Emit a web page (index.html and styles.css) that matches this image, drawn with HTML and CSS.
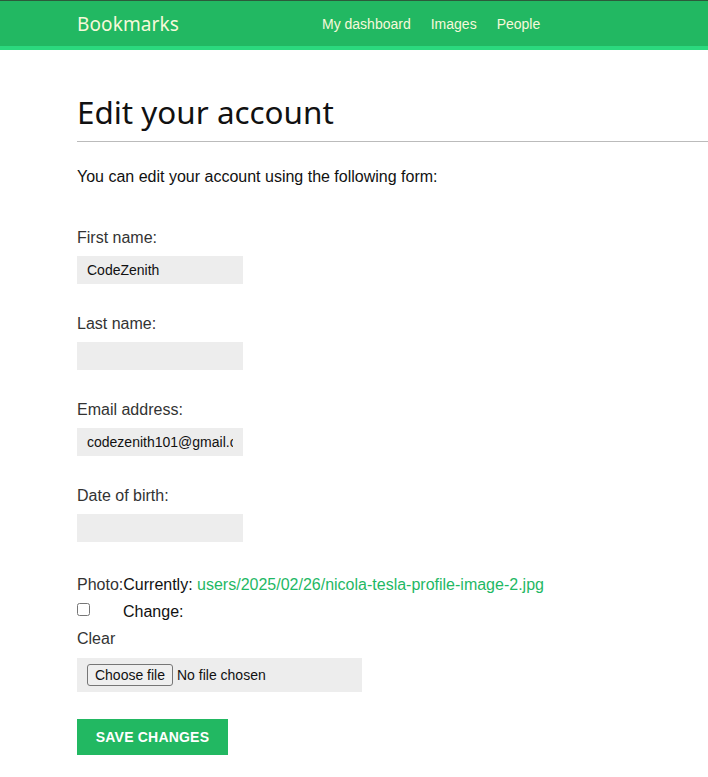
FILE: index.html
```html
<!DOCTYPE html>
<html>
<head>
<meta charset="utf-8">
<link rel="stylesheet" href="styles.css">
<title>Edit your account</title>
</head>
<body>
<div class="header">
  <span class="logo">Bookmarks</span>
  <ul class="menu">
    <li><a href="#">My dashboard</a></li>
    <li><a href="#">Images</a></li>
    <li><a href="#">People</a></li>
  </ul>
</div>
<div class="content">
  <h1 class="title">Edit your account</h1>
  <p class="intro">You can edit your account using the following form:</p>
  <form class="form">
    <div class="field">
      <label class="label">First name:</label>
      <input class="text" type="text" value="CodeZenith">
    </div>
    <div class="field">
      <label class="label">Last name:</label>
      <input class="text" type="text" value="">
    </div>
    <div class="field">
      <label class="label">Email address:</label>
      <input class="text" type="text" value="codezenith101@gmail.com">
    </div>
    <div class="field">
      <label class="label">Date of birth:</label>
      <input class="text" type="text" value="">
    </div>
    <div class="photo">
      <div class="photo-line"><span class="label-inline">Photo:</span><span class="dark">Currently: </span><a class="link" href="#">users/2025/02/26/nicola-tesla-profile-image-2.jpg</a></div>
      <div class="change-line"><input class="check" type="checkbox"><span class="dark change">Change:</span></div>
      <div class="clear">Clear</div>
      <label class="filebox">
        <input class="file" type="file">
        <span class="file-btn">Choose file</span>
        <span class="file-name">No file chosen</span>
      </label>
    </div>
    <button class="save" type="button">Save changes</button>
  </form>
</div>
</body>
</html>
```
FILE: styles.css
```css
html, body {
  margin: 0;
  padding: 0;
}
body {
  font-family: "Liberation Sans", Arial, Helvetica, sans-serif;
  color: #333;
  background: #fff;
}
.header {
  display: flex;
  align-items: center;
  height: 45px;
  padding: 0 77px;
  background: #22b862;
  border-top: 1px solid #2c5a3b;
  border-bottom: 4px solid #2bd97e;
}
.logo {
  font-family: "Noto Sans", sans-serif;
  font-size: 19px;
  color: #f6f9da;
  width: 245px;
  letter-spacing: 0.1px;
}
.menu {
  display: flex;
  gap: 20px;
  list-style: none;
  margin: 0;
  padding: 0;
}
.menu a {
  color: #f6f9da;
  text-decoration: none;
  font-size: 14px;
}
.content {
  padding: 0 0 0 77px;
}
.title {
  font-family: "Noto Sans", sans-serif;
  font-weight: 400;
  font-size: 31.4px;
  color: #111;
  margin: 0;
  padding: 41px 0 8px;
  border-bottom: 1px solid #bbb;
  line-height: 42px;
}
.intro {
  margin: 0;
  padding-top: 24px;
  font-size: 16px;
  color: #111;
  line-height: 22px;
}
.form {
  display: flex;
  flex-direction: column;
  align-items: flex-start;
  padding-top: 39px;
}
.field {
  display: flex;
  flex-direction: column;
  align-items: flex-start;
  height: 86px;
}
.label {
  font-size: 16px;
  line-height: 22px;
  height: 29px;
  color: #333;
}
.text {
  width: 166px;
  height: 28px;
  box-sizing: border-box;
  border: 0;
  background: #ededed;
  padding: 0 10px;
  font-family: "Liberation Sans", Arial, sans-serif;
  font-size: 14px;
  color: #111;
  outline: none;
}
.photo {
  display: flex;
  flex-direction: column;
  align-items: flex-start;
  font-size: 16px;
}
.photo-line {
  line-height: 22px;
  color: #333;
  margin-top: 3px;
}
.dark {
  color: #111;
}
.link {
  color: #1fb865;
  text-decoration: none;
}
.change-line {
  display: flex;
  align-items: center;
  height: 26px;
  margin-top: 2px;
}
.check {
  margin: 0;
  width: 13px;
  height: 13px;
  margin-top: -4px;
}
.change {
  margin-left: 33px;
  line-height: 22px;
  margin-top: 2px;
}
.clear {
  line-height: 22px;
  margin-top: 4px;
  color: #333;
}
.filebox {
  width: 285px;
  height: 34px;
  margin-top: 8px;
  box-sizing: border-box;
  background: #ededed;
  display: flex;
  align-items: center;
  padding-left: 10px;
  font-size: 14px;
  color: #111;
}
.file {
  display: none;
}
.file-btn {
  box-sizing: border-box;
  height: 22px;
  width: 86px;
  border: 1px solid #767676;
  border-radius: 3px;
  background: #efefef;
  display: flex;
  align-items: center;
  justify-content: center;
  color: #111;
}
.file-name {
  margin-left: 4px;
}
.save {
  margin-top: 27px;
  width: 151px;
  height: 36px;
  border: 0;
  background: #22b862;
  color: #fff;
  font-family: "Liberation Sans", Arial, sans-serif;
  font-weight: bold;
  font-size: 14px;
  text-transform: uppercase;
  letter-spacing: 0.2px;
  padding: 0;
}
```
